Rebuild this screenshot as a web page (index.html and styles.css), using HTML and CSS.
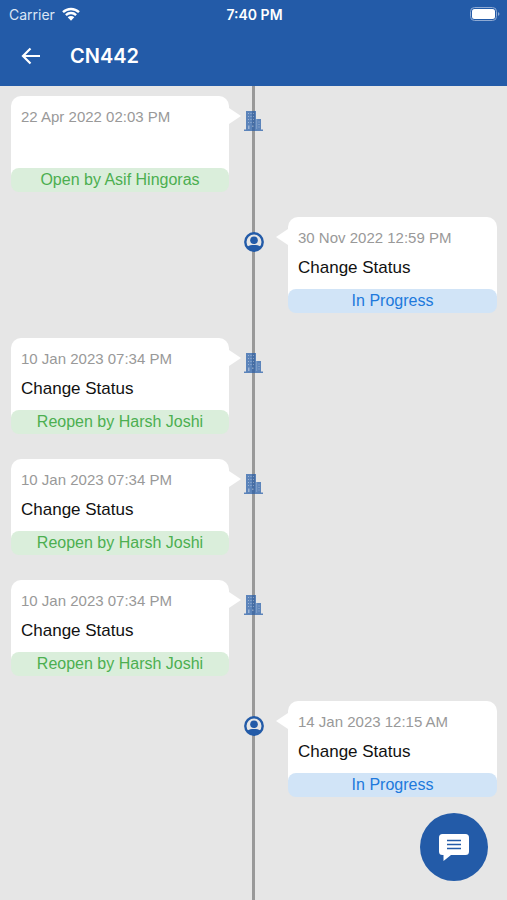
FILE: index.html
```html
<!DOCTYPE html>
<html lang="en">
<head>
<meta charset="utf-8">
<meta name="viewport" content="width=device-width, initial-scale=1">
<title>CN442</title>
<link rel="stylesheet" href="styles.css">
</head>
<body>
<svg class="defs" aria-hidden="true">
  <symbol id="building" viewBox="0 0 20 20">
    <path d="M2 0h10v8h5v10.500h2V20H0v-1.500h2z"/>
    <path class="windows" d="M4 2h1v1H4zM6.500 2h1v1h-1zM9 2h1v1H9zM4 5h1v1H4zM6.500 5h1v1h-1zM9 5h1v1H9zM4 8h1v1H4zM6.500 8h1v1h-1zM9 8h1v1H9zM4 11h1v1H4zM6.500 11h1v1h-1zM9 11h1v1H9zM4 14.500h1.500V18H4zM8 14.500h1.500V16H8zM12.500 8h.6v10h-.6zM14.500 10.500h1v1h-1zM14.500 13h1v1h-1zM14.500 15.500h1v1h-1z"/>
  </symbol>
  <symbol id="person" viewBox="0 0 20 20">
    <circle class="ring" cx="10" cy="10" r="8.700"/>
    <circle cx="10" cy="8.300" r="3.800"/>
    <path d="M3 14.800C5 13.300 7.500 13 10 13s5 .3 7 1.800A8.700 8.700 0 0 1 10 18.700a8.700 8.700 0 0 1-7-3.900z"/>
  </symbol>
</svg>

<header class="top">
  <div class="status">
    <span class="carrier">Carrier
      <svg class="wifi" viewBox="0 0 18 14" aria-hidden="true"><path d="M1 5.200a11.500 11.500 0 0 1 16 0M3.900 8.100a7.400 7.400 0 0 1 10.200 0"/><path class="solid" d="M9 13.800 5.700 10.300a4.700 4.700 0 0 1 6.600 0z"/></svg>
    </span>
    <time class="clock">7:40 PM</time>
    <svg class="battery" viewBox="0 0 30 14" aria-hidden="true"><rect class="case" x=".5" y=".5" width="26" height="13" rx="4"/><rect x="2" y="2" width="23" height="10" rx="2.500"/><path class="cap" d="M28 5q3 2 0 4z"/></svg>
  </div>
  <div class="bar">
    <button class="back" type="button" aria-label="Back">
      <svg viewBox="0 0 20 18" aria-hidden="true"><path d="M19 9H2M9.500 1.500 2 9l7.500 7.500"/></svg>
    </button>
    <h1>CN442</h1>
  </div>
</header>

<main class="timeline">
  <article class="event left">
    <svg class="marker office" aria-hidden="true"><use href="#building"/></svg>
    <div class="card">
      <div class="body"><time>22 Apr 2022 02:03 PM</time></div>
      <p class="tag green">Open by Asif Hingoras</p>
    </div>
  </article>
  <article class="event right">
    <svg class="marker" aria-hidden="true"><use href="#person"/></svg>
    <div class="card">
      <div class="body"><time>30 Nov 2022 12:59 PM</time><h2>Change Status</h2></div>
      <p class="tag blue">In Progress</p>
    </div>
  </article>
  <article class="event left">
    <svg class="marker office" aria-hidden="true"><use href="#building"/></svg>
    <div class="card">
      <div class="body"><time>10 Jan 2023 07:34 PM</time><h2>Change Status</h2></div>
      <p class="tag green">Reopen by Harsh Joshi</p>
    </div>
  </article>
  <article class="event left">
    <svg class="marker office" aria-hidden="true"><use href="#building"/></svg>
    <div class="card">
      <div class="body"><time>10 Jan 2023 07:34 PM</time><h2>Change Status</h2></div>
      <p class="tag green">Reopen by Harsh Joshi</p>
    </div>
  </article>
  <article class="event left">
    <svg class="marker office" aria-hidden="true"><use href="#building"/></svg>
    <div class="card">
      <div class="body"><time>10 Jan 2023 07:34 PM</time><h2>Change Status</h2></div>
      <p class="tag green">Reopen by Harsh Joshi</p>
    </div>
  </article>
  <article class="event right">
    <svg class="marker" aria-hidden="true"><use href="#person"/></svg>
    <div class="card">
      <div class="body"><time>14 Jan 2023 12:15 AM</time><h2>Change Status</h2></div>
      <p class="tag blue">In Progress</p>
    </div>
  </article>
</main>

<button class="chat" type="button" aria-label="Comments">
  <svg viewBox="0 0 30 28" aria-hidden="true"><path class="bubble" d="M3.500 1h23q3.500 0 3.500 3.500v14q0 3.500-3.500 3.500H12l-7.500 6V22h-1Q0 22 0 18.500v-14Q0 1 3.500 1z"/><path class="lines" d="M8 7.500h14M8 11.500h14M8 15.500h14"/></svg>
</button>
</body>
</html>
```
FILE: styles.css
```css
* {
  box-sizing: border-box;
}

body {
  margin: 0;
  min-height: 100vh;
  display: flex;
  flex-direction: column;
  background: #e6e6e6;
  font-family: "Liberation Sans", Arial, sans-serif;
}

h1, h2, p {
  margin: 0;
}

button {
  padding: 0;
  border: 0;
  background: none;
  color: inherit;
}

.defs {
  position: absolute;
  width: 0;
  height: 0;
}

.top {
  background: #235ba8;
  color: #fff;
  font-family: Inter, sans-serif;
}

.status {
  display: grid;
  grid-template-columns: 1fr auto 1fr;
  align-items: center;
  height: 28px;
  padding: 0 7px 0 9px;
  font-size: 14px;
}

.carrier {
  display: flex;
  align-items: center;
  gap: 7px;
  color: #dbe6f5;
}

.wifi {
  width: 18px;
  height: 14px;
  fill: none;
  stroke: #fff;
  stroke-width: 2.4;
}

.wifi .solid {
  fill: #fff;
  stroke: none;
}

.clock {
  font-weight: 600;
}

.battery {
  justify-self: end;
  width: 30px;
  height: 14px;
  fill: #fff;
}

.battery .case {
  fill: none;
  stroke: #8faad3;
}

.battery .cap {
  fill: #8faad3;
}

.bar {
  display: flex;
  align-items: center;
  gap: 29px;
  height: 58px;
  padding: 0 21px 2px;
}

.back {
  display: flex;
}

.back svg {
  width: 20px;
  height: 18px;
  fill: none;
  stroke: #fff;
  stroke-width: 2.2;
}

h1 {
  font-size: 20px;
  font-weight: 600;
}

.timeline {
  flex: 1;
  display: flex;
  flex-direction: column;
  gap: 25px;
  padding: 10px 10px 10px 11px;
  background: linear-gradient(#999, #999) 50% 0 / 3px 100% no-repeat;
}

.event {
  display: grid;
  grid-template-columns: 1fr 50px 1fr;
  align-items: start;
}

.marker {
  grid-area: 1 / 2;
  justify-self: center;
  width: 20px;
  height: 20px;
  margin-top: 15px;
  fill: #235ba8;
}

.marker.office {
  opacity: .7;
}

.windows {
  fill: #7f9fce;
}

.ring {
  fill: #e6e6e6;
  stroke: #235ba8;
  stroke-width: 2.4;
}

.card {
  position: relative;
  grid-area: 1 / 1;
}

.right .card {
  grid-column: 3;
  margin-left: 9px;
}

.card::after {
  content: "";
  position: absolute;
  top: 12px;
  left: 100%;
  width: 12px;
  height: 16px;
  background: #fff;
  clip-path: polygon(0 0, 100% 50%, 0 100%);
}

.right .card::after {
  left: auto;
  right: 100%;
  clip-path: polygon(100% 0, 0 50%, 100% 100%);
}

.body {
  min-height: 79px;
  padding: 11px 10px 0;
  border-radius: 10px 10px 0 0;
  background: #fff;
}

.body time {
  display: block;
  color: #999;
  font-size: 15px;
  line-height: 20px;
}

h2 {
  margin-top: 10px;
  color: #111;
  font-size: 17px;
  font-weight: 400;
  line-height: 20px;
}

.tag {
  position: relative;
  margin-top: -7px;
  border-radius: 8px;
  font-size: 16px;
  line-height: 24px;
  text-align: center;
}

.green {
  background: #daeedb;
  color: #4caf50;
}

.blue {
  background: #d1e4f7;
  color: #2079dc;
}

.chat {
  position: fixed;
  right: 19px;
  bottom: 19px;
  display: grid;
  place-items: center;
  width: 68px;
  height: 68px;
  border-radius: 50%;
  background: #235ba8;
}

.chat svg {
  width: 30px;
  height: 28px;
}

.bubble {
  fill: #fff;
}

.lines {
  stroke: #235ba8;
  stroke-width: 1.6;
}
```
